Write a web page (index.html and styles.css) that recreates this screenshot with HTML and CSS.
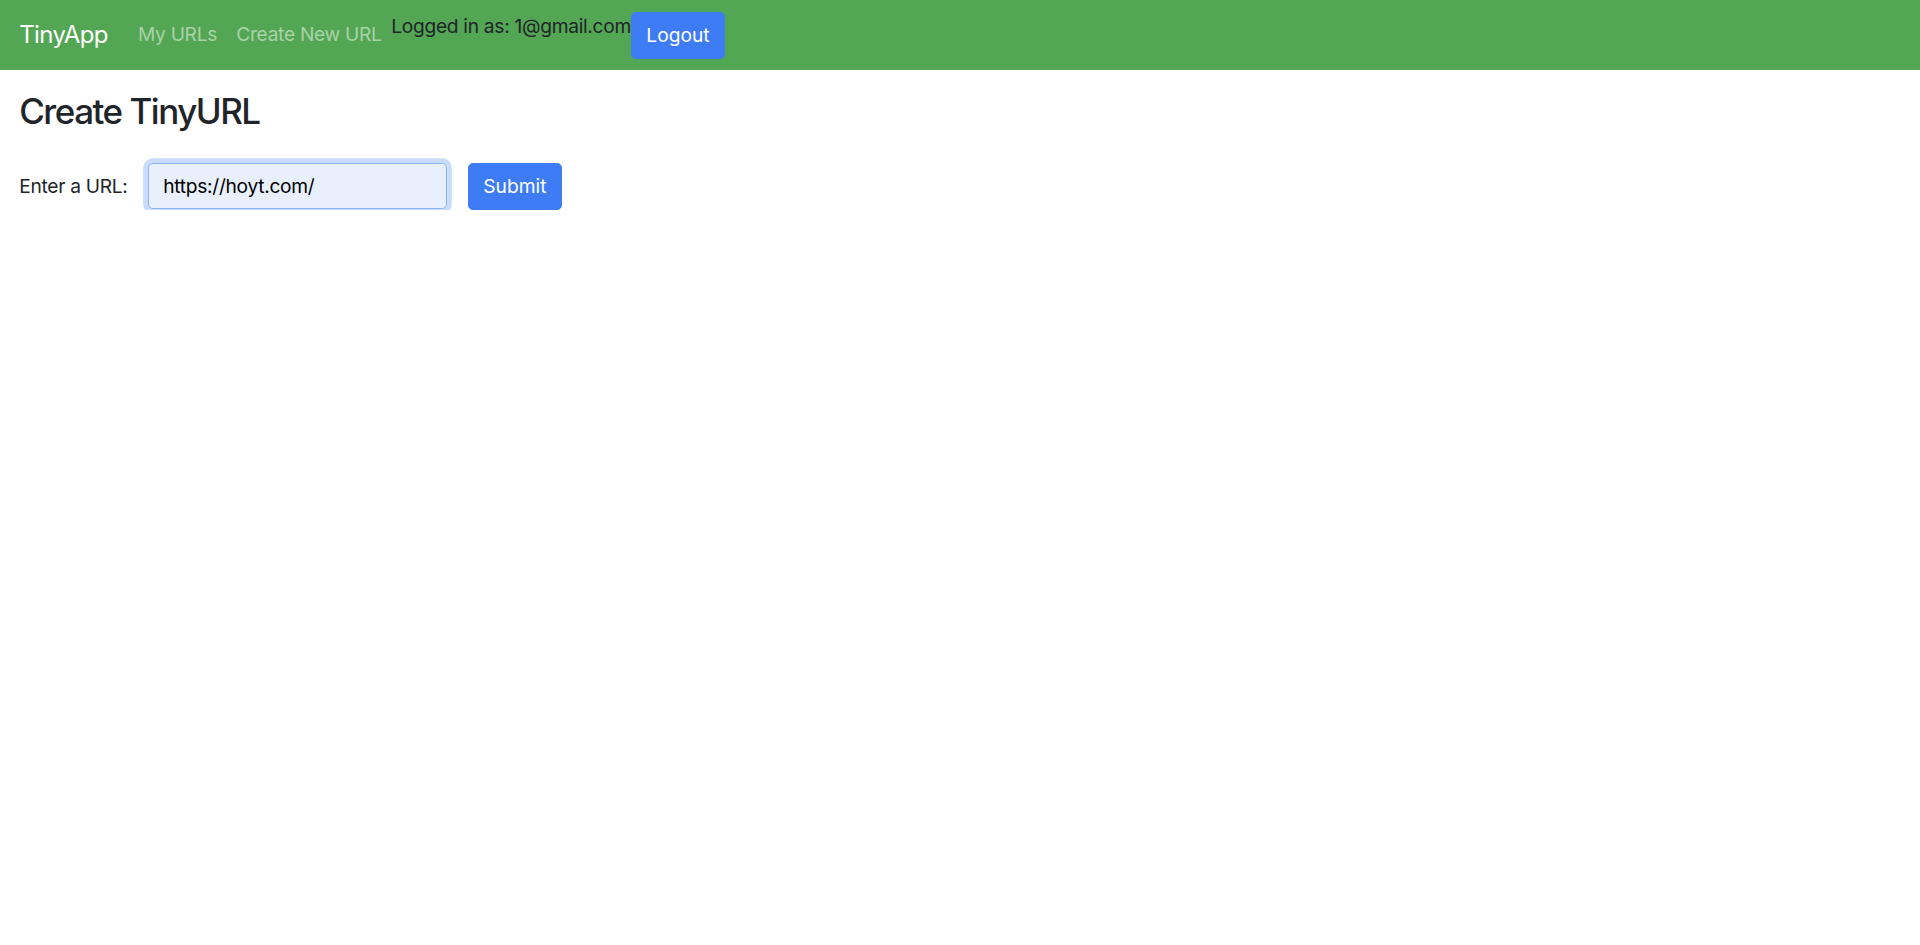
FILE: index.html
```html
<!DOCTYPE html>
<html lang="en">
<head>
<meta charset="utf-8">
<title>TinyApp</title>
<link rel="stylesheet" href="styles.css">
</head>
<body>
<nav class="navbar">
  <a class="brand" href="#">TinyApp</a>
  <ul class="nav-links">
    <li><a class="nav-link" href="#">My URLs</a></li>
    <li><a class="nav-link" href="#">Create New URL</a></li>
  </ul>
  <div class="user-box">
    <span class="user-text">Logged in as: 1@gmail.com</span>
    <button class="btn" type="button">Logout</button>
  </div>
</nav>
<main class="main">
  <h2 class="title">Create TinyURL</h2>
  <form class="url-form">
    <label class="form-label" for="longURL">Enter a URL:</label>
    <input class="form-input" id="longURL" type="text" value="https://hoyt.com/">
    <button class="btn" type="submit">Submit</button>
  </form>
</main>
</body>
</html>
```

FILE: styles.css
```css
* { box-sizing: border-box; }
html, body { margin: 0; padding: 0; background: #fff; }
body {
  font-family: Inter, "Noto Sans", "Liberation Sans", sans-serif;
  font-size: 19.2px;
  line-height: 1.5;
  letter-spacing: -0.3px;
  color: #212529;
}
.navbar {
  display: flex;
  align-items: center;
  background: #53a653;
  padding: 9.6px 19.2px;
  height: 69.6px;
}
.brand {
  font-size: 24px;
  line-height: 36px;
  letter-spacing: -0.6px;
  padding: 7.2px 0;
  margin-right: 20.4px;
  color: #fff;
  text-decoration: none;
}
.nav-links {
  display: flex;
  list-style: none;
  margin: 0;
  padding: 0;
}
.nav-link {
  display: block;
  padding: 9.6px;
  line-height: 28.8px;
  color: rgba(255, 255, 255, 0.5);
  text-decoration: none;
}
.user-box {
  display: flex;
  align-items: flex-start;
  margin-top: 2px;
}
.user-text {
  line-height: 28.8px;
  color: #212529;
}
.btn {
  font-family: inherit;
  font-size: 19.2px;
  line-height: 28.8px;
  letter-spacing: 0;
  padding: 8px 14.4px;
  border: 1.2px solid #3e7cf5;
  border-radius: 4.8px;
  background: #3e7cf5;
  color: #fff;
  cursor: pointer;
}
.main {
  padding: 0 19.2px;
}
.title {
  font-size: 35px;
  font-weight: 500;
  line-height: 42px;
  letter-spacing: -1.5px;
  margin: 20.7px 0 0;
}
.url-form {
  display: flex;
  align-items: center;
  margin-top: 30.5px;
}
.form-label {
  line-height: 28.8px;
  margin-right: 20.4px;
}
.form-input {
  font-family: inherit;
  font-size: 19.2px;
  line-height: 28.8px;
  letter-spacing: -0.3px;
  width: 299px;
  height: 46px;
  padding: 7.2px 14.4px;
  border: 1.2px solid #8ab4f7;
  border-radius: 4.8px;
  background: #e8f0fe;
  color: #000;
  box-shadow: 0 0 0 4.8px #c9dcfb;
  outline: none;
  margin-right: 21px;
}
```
